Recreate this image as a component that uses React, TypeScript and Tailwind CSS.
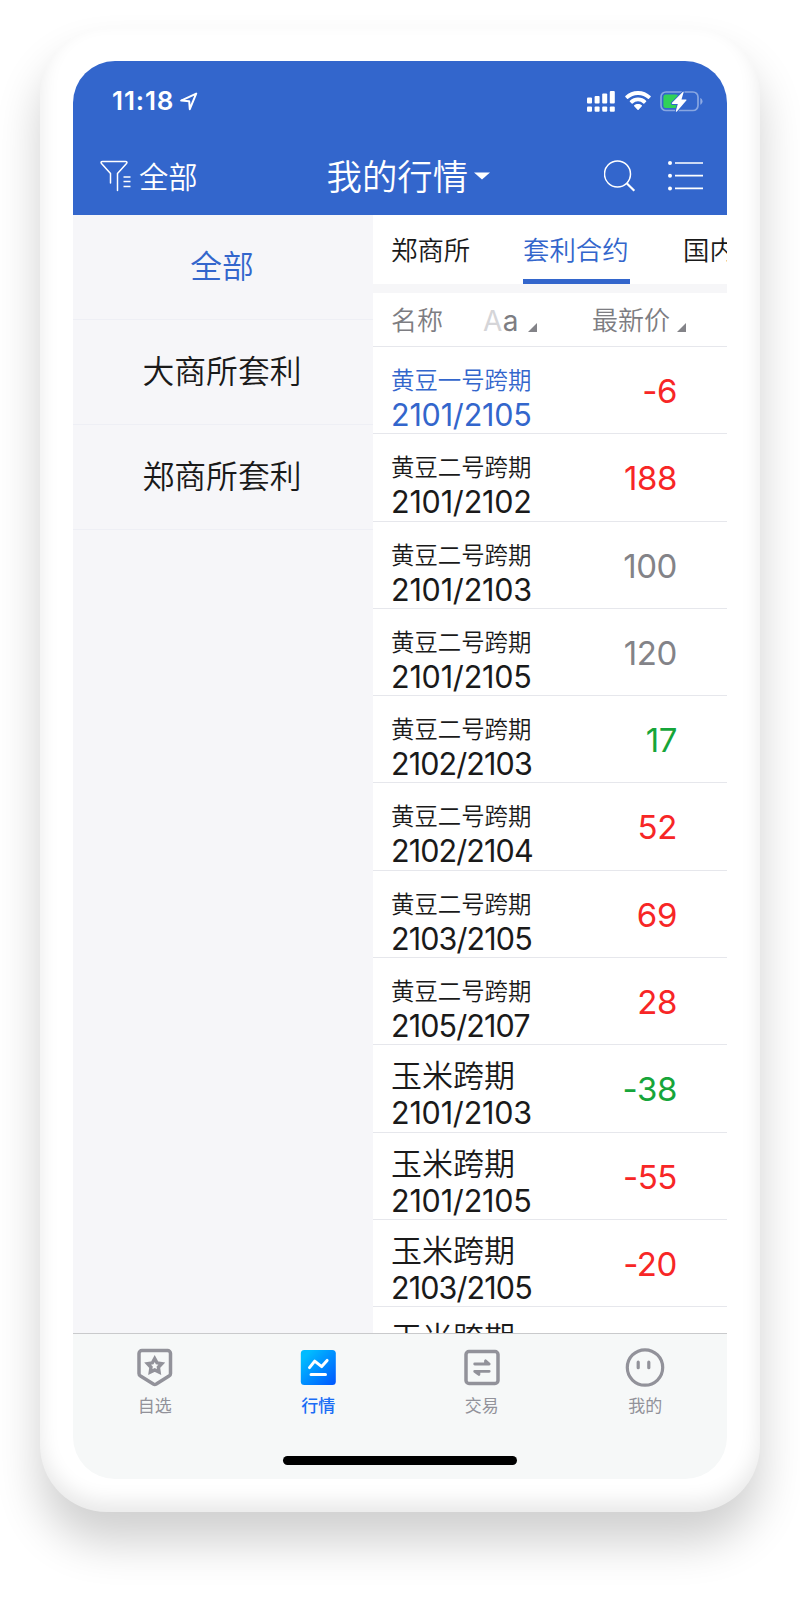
import type { ReactNode } from "react";

type Tone = "up" | "down" | "flat";

const tones = {
  up: "text-[#f72626]",
  down: "text-[#16a53a]",
  flat: "text-[#838388]",
};

const quotes: { name: string; code?: string; price?: string; tone: Tone; active?: boolean }[] = [
  { name: "黄豆一号跨期", code: "2101/2105", price: "-6", tone: "up", active: true },
  { name: "黄豆二号跨期", code: "2101/2102", price: "188", tone: "up" },
  { name: "黄豆二号跨期", code: "2101/2103", price: "100", tone: "flat" },
  { name: "黄豆二号跨期", code: "2101/2105", price: "120", tone: "flat" },
  { name: "黄豆二号跨期", code: "2102/2103", price: "17", tone: "down" },
  { name: "黄豆二号跨期", code: "2102/2104", price: "52", tone: "up" },
  { name: "黄豆二号跨期", code: "2103/2105", price: "69", tone: "up" },
  { name: "黄豆二号跨期", code: "2105/2107", price: "28", tone: "up" },
  { name: "玉米跨期", code: "2101/2103", price: "-38", tone: "down" },
  { name: "玉米跨期", code: "2101/2105", price: "-55", tone: "up" },
  { name: "玉米跨期", code: "2103/2105", price: "-20", tone: "up" },
  { name: "玉米跨期", tone: "flat" },
];

const groups = ["全部", "大商所套利", "郑商所套利"];

function StatusBar() {
  return (
    <div className="flex h-20 items-center pl-[39px] pr-6">
      <span className="w-[68px] whitespace-nowrap text-[26px] font-semibold leading-none tracking-[0.900px]">11:18</span>
      <svg width="18" height="19" viewBox="0 0 18 19" fill="none" stroke="#fff" strokeWidth="2" strokeLinejoin="round">
        <path d="M16.200 1.600 1.200 8.600l8 .6.6 8z" />
      </svg>
      <svg className="ml-auto" width="28" height="21" viewBox="0 0 28 21" fill="#fff">
        <rect x="0" y="6.500" width="5" height="6" rx="1" />
        <rect x="7.600" y="5" width="5" height="7.500" rx="1" />
        <rect x="15.200" y="2.600" width="5" height="9.900" rx="1" />
        <rect x="22.800" y="0" width="5" height="12.500" rx="1" />
        <rect x="0" y="15.400" width="5" height="5.300" rx="1" />
        <rect x="7.600" y="15.400" width="5" height="5.300" rx="1" />
        <rect x="15.200" y="15.400" width="5" height="5.300" rx="1" />
        <rect x="22.800" y="15.400" width="5" height="5.300" rx="1" />
      </svg>
      <svg className="ml-[10px]" width="26" height="20" viewBox="0 0 26 20" fill="#fff">
        <path d="M13 0c4.900 0 9.300 1.900 12.600 5 .3.300.3.700 0 1l-1.700 1.700c-.3.300-.7.300-1 0A14.200 14.200 0 0 0 13 3.900 14.200 14.200 0 0 0 3.100 7.700c-.3.300-.7.300-1 0L.4 6c-.3-.3-.3-.7 0-1A18.200 18.200 0 0 1 13 0z" />
        <path d="M13 6.500c3.100 0 6 1.200 8.100 3.200.3.300.3.700 0 1l-1.800 1.700c-.3.300-.7.300-1 0a7.800 7.800 0 0 0-10.600 0c-.3.300-.7.300-1 0L4.900 10.700c-.3-.3-.3-.7 0-1A11.800 11.800 0 0 1 13 6.500z" />
        <path d="M13 12.900c1.500 0 2.800.5 3.800 1.400.3.300.3.700 0 1l-3.200 3.400c-.3.300-.8.300-1.100 0l-3.300-3.400c-.3-.3-.3-.7 0-1 1-.9 2.300-1.400 3.800-1.400z" />
      </svg>
      <svg className="ml-[9px]" width="43" height="21" viewBox="0 0 43 21">
        <rect x="1" y="1" width="37" height="18.500" rx="5" fill="none" stroke="#fff" strokeOpacity=".42" strokeWidth="1.700" />
        <path d="M40.300 7v6.700c1.300-.5 2.200-1.800 2.200-3.400s-.9-2.800-2.200-3.300z" fill="#fff" fillOpacity=".45" />
        <rect x="3.400" y="3.600" width="15" height="13.300" rx="2.500" fill="#30d158" />
        <path d="M23.200.5 12 11.800c-.5.600-.2 1.200.5 1.200h5.300L15.800 20c-.2.800.6 1 1.100.4L26.300 9.600c.5-.6.200-1.200-.5-1.200h-4.300L23.700 1z" fill="#fff" stroke="#3366cc" strokeWidth="1.800" paintOrder="stroke" />
      </svg>
    </div>
  );
}

function NavBar() {
  return (
    <div className="flex h-[73.500px] items-center pb-[4px] pl-[27px] pr-6 font-[350]">
      <svg width="31" height="32" viewBox="0 0 31 32" fill="none" stroke="#fff" strokeWidth="1.500" strokeLinejoin="round" strokeLinecap="round">
        <path d="M10.500 23V13.600L1.500 3.500Q.2 1.500 2.500 1.500H25.500Q27.800 1.500 26.500 3.500L17.500 13.600V30.500" />
        <path d="M23.500 17h7M23.500 21.500h7M23.500 26.500h7" strokeLinecap="butt" />
      </svg>
      <span className="ml-[8px] pt-[3px] text-[29.300px] leading-none">全部</span>
      <span className="ml-[129px] pt-[3px] text-[35.400px] leading-none">我的行情</span>
      <svg className="ml-[6px] mt-[1px]" width="16" height="8" viewBox="0 0 16 8" fill="#fff">
        <path d="M0 .5h16L8 7.500z" />
      </svg>
      <svg className="ml-auto" width="32" height="32" viewBox="0 0 32 32" fill="none" stroke="#fff" strokeWidth="1.500">
        <circle cx="13.500" cy="14" r="13" />
        <path d="m22.700 23.200 7.600 7.600" strokeWidth="2.200" />
      </svg>
      <svg className="ml-[32px]" width="35" height="32" viewBox="0 0 35 32" stroke="#fff" strokeWidth="1.700" fill="#fff">
        <path d="M7 3h28M7 15.700h28M7 28.400h28" />
        <g stroke="none">
          <circle cx="2" cy="3" r="2" />
          <circle cx="2" cy="15.700" r="2" />
          <circle cx="2" cy="28.400" r="2" />
        </g>
      </svg>
    </div>
  );
}

function SortMark({ className }: { className: string }) {
  return (
    <svg className={className} width="9" height="9" viewBox="0 0 9 9" fill="#838388">
      <path d="M9 0v9H0z" />
    </svg>
  );
}

function TabItem({ label, active, children }: { label: string; active?: boolean; children: ReactNode }) {
  return (
    <div className={`flex flex-col items-center pt-[13px] ${active ? "font-medium text-[#1a6df5]" : "text-[#92929a]"}`}>
      <svg width="40" height="40" viewBox="0 0 40 40" fill="none" stroke="currentColor">
        {children}
      </svg>
      <span className="mt-[8.500px] text-[17px] leading-5">{label}</span>
    </div>
  );
}

export default function App() {
  return (
    <div className="h-[1624px] w-[800px] overflow-hidden bg-white px-10 pt-7 font-['Inter','Noto_Sans_CJK_SC',sans-serif]">
      <div className="h-[1484px] rounded-[67px] bg-white p-[33px] shadow-[0_30px_45px_rgba(0,0,0,0.19),inset_0_-10px_20px_rgba(0,0,0,0.09)]">
        <div className="flex h-[1418px] flex-col overflow-hidden rounded-[42px] bg-white">
          <header className="bg-[#3366cc] text-white">
            <StatusBar />
            <NavBar />
          </header>

          <main className="flex min-h-0 flex-1">
            {/* Exchange groups */}
            <aside className="w-[300px] bg-[#f6f6f9]">
              {groups.map((g, i) => (
                <div
                  key={g}
                  className={`flex h-[105px] items-center justify-center border-b border-[#eeeff5] pr-[2px] pt-[1px] text-[31.800px] font-[350] ${
                    i === 0 ? "text-[#3366cc]" : "text-[#1a1a1a]"
                  }`}
                >
                  {g}
                </div>
              ))}
            </aside>

            <section className="flex flex-1 flex-col overflow-hidden">
              <div className="flex h-[69.500px] shrink-0 whitespace-nowrap pl-[18px] text-[26.400px] font-[350] leading-[70px] text-[#1a1a1a]">
                <span className="w-[132px] shrink-0">郑商所</span>
                <span className="mr-[53px] w-[107px] shrink-0 border-b-[5px] border-[#3366cc] text-[#3366cc]">套利合约</span>
                <span>国内</span>
              </div>
              <div className="h-[9px] shrink-0 bg-[#f6f6f8]" />
              <div className="flex h-[54px] shrink-0 items-center border-b border-[#e6e7ec] pl-[18px] pt-[2px] text-[26px] font-[350] text-[#7d7d82]">
                <span className="w-[92px]">名称</span>
                <span className="w-[45px] text-[28px] font-normal tracking-[0.500px]">
                  <span className="text-[#d5d5d8]">A</span>a
                </span>
                <SortMark className="mt-[14px]" />
                <span className="ml-[55px] w-[85px]">最新价</span>
                <SortMark className="mt-[14px]" />
              </div>

              {quotes.map((q, i) => (
                <div
                  key={i}
                  className={`flex h-[87.300px] shrink-0 items-start justify-between border-b border-[#e6e7ec] pl-[18px] pr-[50px] ${
                    q.active ? "text-[#3366cc]" : "text-[#1a1a1a]"
                  }`}
                >
                  <div className="font-[350]">
                    <p className={q.name.length > 4 ? "pt-4 text-[23.400px] leading-9" : "pb-[3px] pt-[13px] text-[31px] leading-9"}>
                      {q.name}
                    </p>
                    {/* the narrow 1s in 2101 need looser tracking to line the codes up */}
                    {q.code && (
                      <p
                        className={`text-[30.500px] font-normal leading-8 ${
                          q.code.startsWith("2101") ? "tracking-[-0.200px]" : "tracking-[-0.900px]"
                        }`}
                      >
                        {q.code}
                      </p>
                    )}
                  </div>
                  {q.price && <span className={`pt-6 text-[33px] leading-10 tracking-[-0.400px] ${tones[q.tone]}`}>{q.price}</span>}
                </div>
              ))}
            </section>
          </main>

          <footer className="h-[146px] border-t border-[#c9cacc] bg-[#f6f8f8]">
            <nav className="grid h-[122px] grid-cols-4">
              <TabItem label="自选">
                <path d="M7 3.500h25.500a3 3 0 0 1 3 3v20a3 3 0 0 1-1.500 2.600l-12.700 8a3 3 0 0 1-3 0l-12.800-8a3 3 0 0 1-1.500-2.600v-20a3 3 0 0 1 3-3z" strokeWidth="3.500" />
                <path d="m19.700 11.500 2.300 4.300 4.800.9-3.400 3.500.7 4.900-4.400-2.200-4.400 2.200.7-4.900-3.400-3.500 4.800-.9z" strokeWidth="3.400" />
              </TabItem>
              <TabItem label="行情" active>
                <defs>
                  <linearGradient id="quote" x1="0" y1="0" x2="1" y2="1">
                    <stop offset=".15" stopColor="#00bbff" />
                    <stop offset="1" stopColor="#0055ff" />
                  </linearGradient>
                </defs>
                <rect x="2.800" y="3" width="35" height="35" rx="3.500" fill="url(#quote)" stroke="none" />
                <path d="m11.500 20.600 5.200-6.500 7 5.500 5.400-6.200M13 27.500h14.500" stroke="#fff" strokeWidth="3" strokeLinecap="round" strokeLinejoin="round" />
              </TabItem>
              <TabItem label="交易">
                <rect x="4" y="4.500" width="32" height="32" rx="3" strokeWidth="3.500" />
                <path d="M12.700 17h14.500l-3.700-3.200V17M27.200 24.300H12.700l4.200 3.200v-3.200" strokeWidth="2.800" strokeLinecap="round" strokeLinejoin="round" />
              </TabItem>
              <TabItem label="我的">
                <circle cx="20" cy="20.500" r="17.700" strokeWidth="3.200" />
                <path d="M13.200 15.200v5.500M23.800 15.200v5.500" strokeWidth="3.200" strokeLinecap="round" />
              </TabItem>
            </nav>
            <div className="mx-auto h-[9px] w-[234px] rounded-full bg-black" />
          </footer>
        </div>
      </div>
    </div>
  );
}
